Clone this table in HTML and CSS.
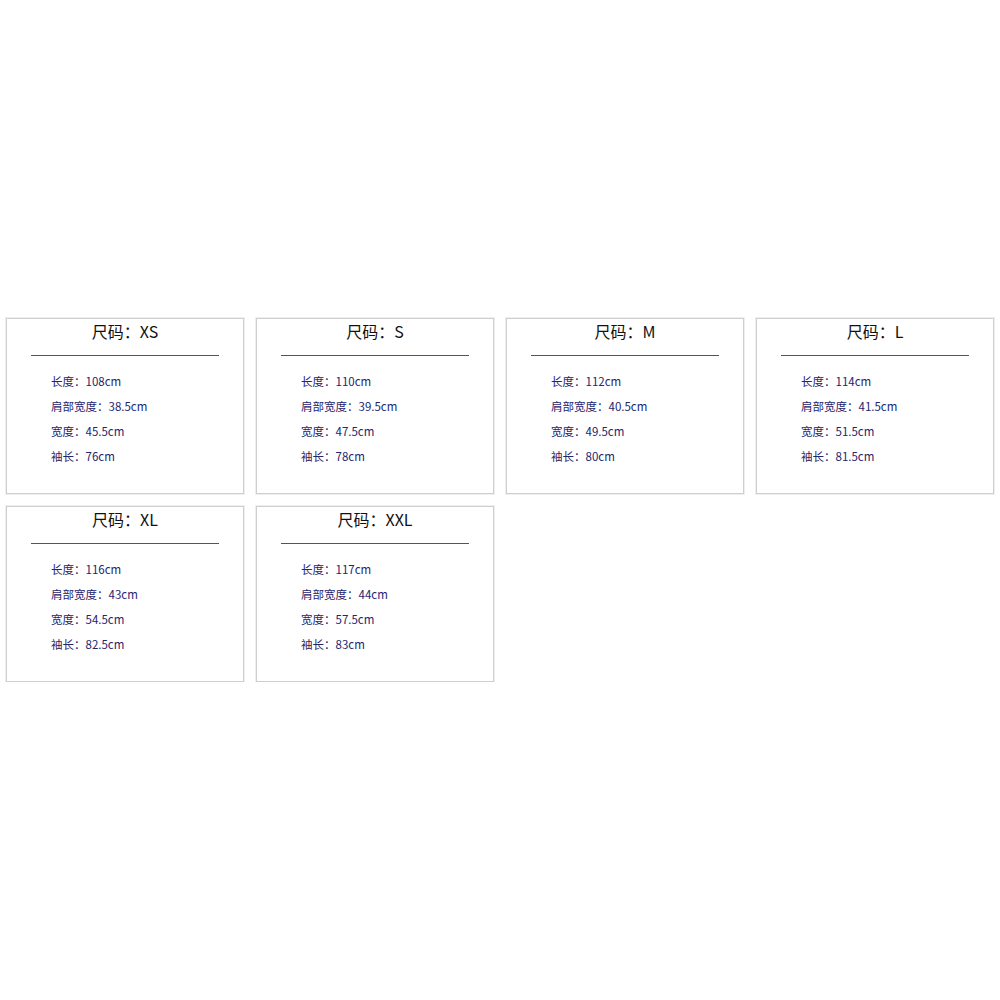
FILE: index.html
```html
<!DOCTYPE html>
<html lang="zh">
<head>
<meta charset="utf-8">
<title>尺码表</title>
<link rel="stylesheet" href="styles.css">
</head>
<body>
<div class="sheet">
  <div class="card">
    <div class="title">尺码：XS</div>
    <div class="rule"></div>
    <ul class="specs">
      <li>长度：108cm</li>
      <li>肩部宽度：38.5cm</li>
      <li>宽度：45.5cm</li>
      <li>袖长：76cm</li>
    </ul>
  </div>
  <div class="card">
    <div class="title">尺码：S</div>
    <div class="rule"></div>
    <ul class="specs">
      <li>长度：110cm</li>
      <li>肩部宽度：39.5cm</li>
      <li>宽度：47.5cm</li>
      <li>袖长：78cm</li>
    </ul>
  </div>
  <div class="card">
    <div class="title">尺码：M</div>
    <div class="rule"></div>
    <ul class="specs">
      <li>长度：112cm</li>
      <li>肩部宽度：40.5cm</li>
      <li>宽度：49.5cm</li>
      <li>袖长：80cm</li>
    </ul>
  </div>
  <div class="card">
    <div class="title">尺码：L</div>
    <div class="rule"></div>
    <ul class="specs">
      <li>长度：114cm</li>
      <li>肩部宽度：41.5cm</li>
      <li>宽度：51.5cm</li>
      <li>袖长：81.5cm</li>
    </ul>
  </div>
  <div class="card">
    <div class="title">尺码：XL</div>
    <div class="rule"></div>
    <ul class="specs">
      <li>长度：116cm</li>
      <li>肩部宽度：43cm</li>
      <li>宽度：54.5cm</li>
      <li>袖长：82.5cm</li>
    </ul>
  </div>
  <div class="card">
    <div class="title">尺码：XXL</div>
    <div class="rule"></div>
    <ul class="specs">
      <li>长度：117cm</li>
      <li>肩部宽度：44cm</li>
      <li>宽度：57.5cm</li>
      <li>袖长：83cm</li>
    </ul>
  </div>
</div>
</body>
</html>
```
FILE: styles.css
```css
html, body {
  margin: 0;
  padding: 0;
  background: #ffffff;
}
body {
  font-family: "Noto Sans CJK SC", "Liberation Sans", sans-serif;
}
.sheet {
  display: grid;
  grid-template-columns: repeat(4, 238px);
  column-gap: 12px;
  row-gap: 12px;
  padding: 318px 0 0 6px;
}
.card {
  box-sizing: border-box;
  height: 176px;
  border: 1px solid #cfcfcf;
  box-shadow: 0 0 0 1px #efefef;
  background: #fff;
}
.title {
  margin-top: 0;
  text-align: center;
  font-size: 16px;
  line-height: 24px;
  color: #111;
}
.rule {
  width: 188px;
  margin: 12px auto 0;
  border-top: 1px solid #555;
}
.specs {
  list-style: none;
  margin: 13px 0 0;
  padding: 0 0 0 44px;
}
.specs li {
  font-size: 11.5px;
  line-height: 25px;
  color: #25256e;
}
```
